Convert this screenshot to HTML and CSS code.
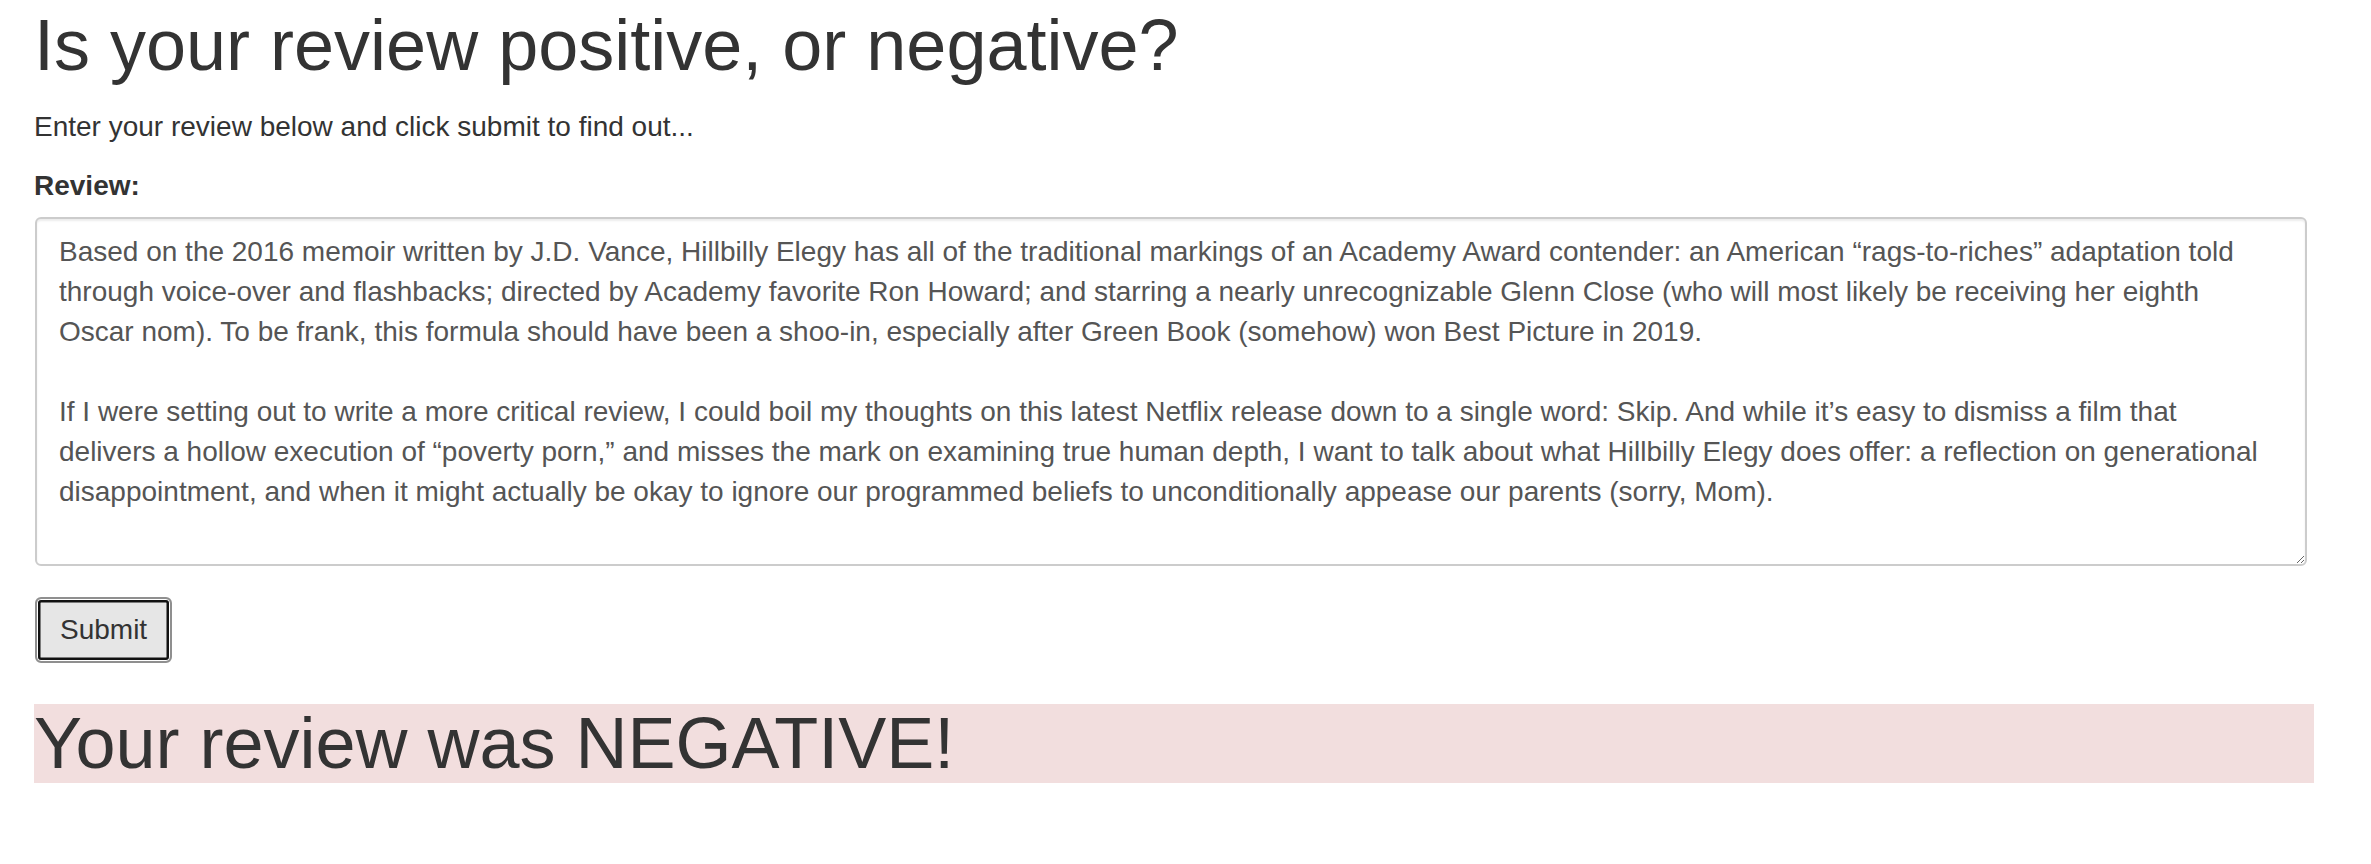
FILE: index.html
```html
<!DOCTYPE html>
<html lang="en">
<head>
<meta charset="utf-8">
<title>Review Sentiment</title>
<link rel="stylesheet" href="styles.css">
</head>
<body>
<div class="page">
  <h1 class="title">Is your review positive, or negative?</h1>
  <p class="intro">Enter your review below and click submit to find out...</p>
  <form class="review-form">
    <label class="field-label" for="review">Review:</label>
    <textarea id="review" class="review-input">Based on the 2016 memoir written by J.D. Vance, Hillbilly Elegy has all of the traditional markings of an Academy Award contender: an American “rags-to-riches” adaptation told through voice-over and flashbacks; directed by Academy favorite Ron Howard; and starring a nearly unrecognizable Glenn Close (who will most likely be receiving her eighth Oscar nom). To be frank, this formula should have been a shoo-in, especially after Green Book (somehow) won Best Picture in 2019.

If I were setting out to write a more critical review, I could boil my thoughts on this latest Netflix release down to a single word: Skip. And while it’s easy to dismiss a film that delivers a hollow execution of “poverty porn,” and misses the mark on examining true human depth, I want to talk about what Hillbilly Elegy does offer: a reflection on generational disappointment, and when it might actually be okay to ignore our programmed beliefs to unconditionally appease our parents (sorry, Mom).</textarea>
    <div class="actions">
      <button type="button" class="submit-btn">Submit</button>
    </div>
  </form>
  <h1 class="result">Your review was NEGATIVE!</h1>
</div>
</body>
</html>
```

FILE: styles.css
```css
html, body {
  margin: 0;
  padding: 0;
  background: #ffffff;
}

body {
  font-family: "Liberation Sans", Arial, Helvetica, sans-serif;
  color: #333333;
}

.page {
  padding: 6px 0 0 34px;
}

.title {
  margin: 0;
  font-size: 72px;
  line-height: 79.2px;
  font-weight: normal;
  color: #333333;
}

.intro {
  margin: 22px 0 0 0;
  font-size: 28px;
  line-height: 40px;
}

.review-form {
  display: flex;
  flex-direction: column;
  align-items: flex-start;
  margin-top: 18.4px;
}

.field-label {
  font-size: 28px;
  line-height: 40px;
  font-weight: bold;
}

.review-input {
  box-sizing: border-box;
  margin: 11.7px 0 0 1px;
  width: 2272px;
  height: 348.4px;
  padding: 12.5px 28px 10px 22px;
  font-family: "Liberation Sans", Arial, Helvetica, sans-serif;
  font-size: 28px;
  line-height: 40px;
  color: #555555;
  background: #ffffff;
  border: 2px solid #cccccc;
  border-radius: 6px;
  box-shadow: inset 0 2px 2px rgba(0, 0, 0, 0.075);
  resize: both;
  outline: none;
}

.actions {
  margin: 31.3px 0 0 1px;
}

.submit-btn {
  box-sizing: border-box;
  height: 66px;
  padding: 11px 23px;
  font-family: "Liberation Sans", Arial, Helvetica, sans-serif;
  font-size: 28px;
  line-height: 40px;
  color: #333333;
  background: #e6e6e6;
  border: 2px solid #8f8f8f;
  border-radius: 6px;
  box-shadow: inset 0 0 0 1px #ffffff, inset 0 0 0 3.5px #111111;
}

.result {
  margin: 41.5px 0 0 0;
  width: 2280px;
  font-size: 72px;
  line-height: 79px;
  font-weight: normal;
  color: #333333;
  background: #f2dede;
}
```
